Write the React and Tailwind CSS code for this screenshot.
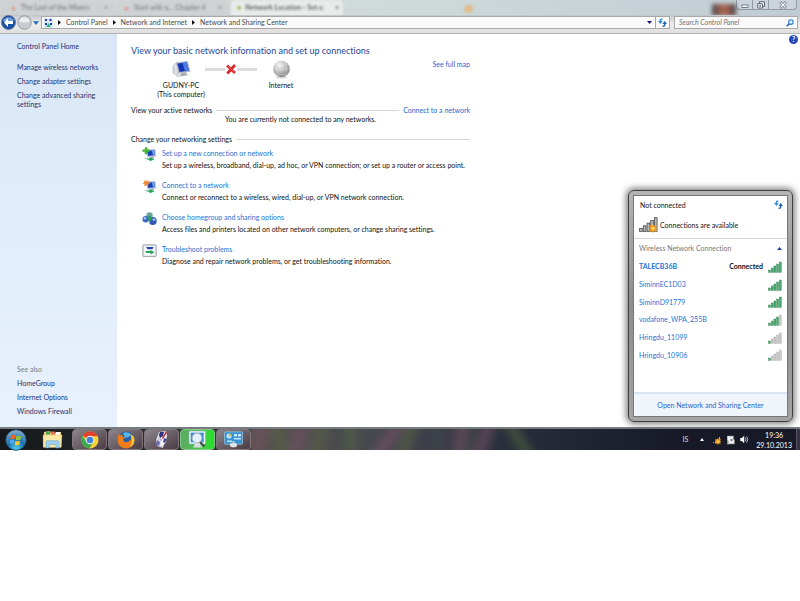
import React from "react";

const tasks = [
  {
    icon: "new",
    title: "Set up a new connection or network",
    text: "Set up a wireless, broadband, dial-up, ad hoc, or VPN connection; or set up a router or access point.",
  },
  {
    icon: "connect",
    title: "Connect to a network",
    text: "Connect or reconnect to a wireless, wired, dial-up, or VPN network connection.",
  },
  {
    icon: "homegroup",
    title: "Choose homegroup and sharing options",
    text: "Access files and printers located on other network computers, or change sharing settings.",
  },
  {
    icon: "trouble",
    title: "Troubleshoot problems",
    text: "Diagnose and repair network problems, or get troubleshooting information.",
  },
];

const networks = [
  { name: "TALECB36B", bars: 5, connected: true },
  { name: "SiminnEC1D03", bars: 5 },
  { name: "SiminnD91779", bars: 5 },
  { name: "vodafone_WPA_255B", bars: 4 },
  { name: "Hringdu_11099", bars: 1 },
  { name: "Hringdu_10906", bars: 1 },
];

// ================= ICONS =================
const SignalBars = ({ bars }) => (
  <svg className="h-3 w-[14px]" viewBox="0 0 14 12" aria-hidden="true">
    {[0, 1, 2, 3, 4].map((i) => (
      <rect
        key={i}
        x={0.5 + i * 2.7}
        y={9 - i * 2}
        width="2"
        height={2.5 + i * 2}
        fill={i < bars ? "#4fa873" : "#cacaca"}
        stroke={i < bars ? "#26834c" : "#a5a5a5"}
        strokeWidth="0.4"
      />
    ))}
  </svg>
);

const Star = ({ x, y, r }) => (
  <g transform={`translate(${x} ${y}) scale(${r})`}>
    <path
      d="M0-1 .25-.45.8-.75.5-.2 1 0 .5.2.8.75.25.45 0 1-.25.45-.8.75-.5.2-1 0-.5-.2-.8-.75-.25-.45Z"
      fill="#f7a21b"
      stroke="#f7a21b"
      strokeWidth=".2"
    />
    <circle r=".35" fill="#ffd76a" />
  </g>
);

const AvailableIcon = () => (
  <svg className="h-4 w-[19px]" viewBox="0 0 19 16" aria-hidden="true">
    {[0, 1, 2, 3, 4].map((i) => (
      <rect
        key={i}
        x={0.6 + i * 3.7}
        y={11.5 - i * 2.7}
        width="2.7"
        height={3 + i * 2.7}
        fill="#b9b9b9"
        stroke="#4d4d4d"
        strokeWidth=".8"
      />
    ))}
    <Star x={14} y={11.5} r={4} />
  </svg>
);

const RefreshIcon = () => (
  <svg className="h-[9px] w-[9px]" viewBox="0 0 9 9" aria-hidden="true">
    <path d="M4.4 1.2C2.7.8 2 1.8 2.4 3.4" fill="none" stroke="#2f8bd8" strokeWidth="1.4" />
    <path d="M.1 3h4.600L2.400 6Z" fill="#2f8bd8" />
    <path d="M4.6 8.2c1.9.3 2.3-1 2-2.6" fill="none" stroke="#1f62b8" strokeWidth="1.4" />
    <path d="M4.400 6H9L6.700 3Z" fill="#1f62b8" />
  </svg>
);

const ComputerIcon = () => (
  <svg className="h-[17px] w-[19px]" viewBox="0 0 19 17" aria-hidden="true">
    <path d="m1 4.500 3-2.500h3v11l-3 1-3-2Z" fill="#d4d7dc" stroke="#a1a5ad" strokeWidth=".5" />
    <path d="m1 4.500 3 .8v8" fill="none" stroke="#f3f3f3" strokeWidth=".8" />
    <path d="m4.500 1.600 11-1.200 2.500 10-11 1.500Z" fill="#cfd4de" stroke="#8c93a3" strokeWidth=".5" />
    <path d="m5.300 2.400 9.500-1.100 2.200 8.400-9.400 1.400Z" fill="#1736b5" />
    <path d="m10.500 1.800 4.300-.5 2.200 8.400-4 .6Z" fill="#4d7ae4" />
    <path d="m9 12 5-.8 1 2.200 2 .7-8 1.500-1-1.300Z" fill="#a9adb6" />
    <path d="m4 14.700 4-.6 1 1-4 .9Z" fill="#c2c4c8" />
  </svg>
);

const GlobeIcon = () => (
  <svg className="h-[19px] w-[19px]" viewBox="0 0 19 19" aria-hidden="true">
    <defs>
      <radialGradient id="globe" cx=".38" cy=".28" r=".75">
        <stop offset="0" stopColor="#f4f4f4" />
        <stop offset=".5" stopColor="#c0c0c0" />
        <stop offset="1" stopColor="#7d7d7d" />
      </radialGradient>
    </defs>
    <ellipse cx="9.500" cy="17.400" rx="5.500" ry="1.200" fill="#dadada" />
    <circle cx="9.500" cy="9" r="8.300" fill="url(#globe)" />
    <path
      d="M1.500 8q8 4 16 0M3.300 4q6 3 12.400 0M3 13.800q6.500 2.400 13 0M6 1.700q-4 7 .2 14.500M13 1.700q4 7-.2 14.500"
      fill="none"
      stroke="#eee"
      strokeWidth=".6"
      opacity=".5"
    />
  </svg>
);

const Monitor = () => (
  <>
    <path d="m4.500 3 8.500-1 1 7-8.500 1Z" fill="#dde6f2" stroke="#8793aa" strokeWidth=".4" />
    <path d="m5.300 3.700 7-.8.8 5.400-7 .8Z" fill="#1b3fb4" />
    <path d="m9.500 3.200 2.800-.3.800 5.400-1.800.2Z" fill="#6c9df0" />
    <path d="m8.500 10 3-.4.8 1.600-4 .5Z" fill="#9aa5b5" />
    <path d="M2 11.500h5.500V10l5 2.600-5 1.700v-1.200Z" fill="#23a455" />
  </>
);

const TaskIcon = ({ kind }) => (
  <svg className="h-[15px] w-[15px]" viewBox="0 0 15 15" aria-hidden="true">
    {kind === "new" && (
      <>
        <Monitor />
        <path d="M3 .5h2.200v2.200h2.300v2.100H5.200v2.300H3V4.800H.7V2.700H3Z" fill="#41bd36" stroke="#258f20" strokeWidth=".3" />
      </>
    )}
    {kind === "connect" && (
      <>
        <Monitor />
        <path d="m4 .4.9 1.900 2-.6-.6 2 1.800 1-2 .8.2 2L4.300 6.300 2.500 7.400l-.1-2.100L.4 4.400l1.900-1-.5-2 1.700.9Z" fill="#f08a37" />
      </>
    )}
    {kind === "homegroup" && (
      <>
        <circle cx="7.500" cy="4.500" r="3.200" fill="#6fa6a0" />
        <circle cx="3.800" cy="8.300" r="3.300" fill="#3a68c4" />
        <circle cx="10.800" cy="10" r="3.900" fill="#3058b8" />
        <circle cx="2.900" cy="7.300" r="1.300" fill="#a8c4f2" />
        <circle cx="12" cy="8.500" r="1.500" fill="#93b5ee" />
        <path d="m7 3.500 3 3.300-1 3.200-3-.5Z" fill="#2da054" />
        <path d="m6 10 2 .5L7 12Z" fill="#dfe7f5" />
      </>
    )}
    {kind === "trouble" && (
      <>
        <rect x=".8" y="1.800" width="13.400" height="11.800" rx=".8" fill="#e3e6ea" stroke="#8a9199" strokeWidth=".8" />
        <rect x="2.300" y="3.300" width="10.400" height="8.700" fill="#fbfdff" />
        <path d="M4 4h7.500l-1 2.200H5.500Z" fill="#2446b0" />
        <path d="M3 8h5.500V6.900l4 2.300-4 2.200V10H4.500Z" fill="#27a352" />
      </>
    )}
  </svg>
);

const StartOrb = () => (
  <svg className="h-[22px] w-[22px]" viewBox="0 0 22 22" aria-hidden="true">
    <defs>
      <radialGradient id="orb" cx=".5" cy=".9" r=".9">
        <stop offset="0" stopColor="#4fd0f3" />
        <stop offset=".45" stopColor="#1c6ea8" />
        <stop offset="1" stopColor="#8ab2cb" />
      </radialGradient>
    </defs>
    <circle cx="11" cy="11" r="10.300" fill="url(#orb)" stroke="#18405f" strokeWidth=".8" />
    <path d="M6 6.500q2.200-1.500 4.500-.2L9.800 10.200q-2.200-1.200-4.500 0Z" fill="#f0652a" />
    <path d="M11.400 6.700q2.300 1.200 4.800 0l-.8 4q-2.400 1.100-4.700 0Z" fill="#8cc63c" />
    <path d="M5.100 11.200q2.300-1.200 4.500 0L8.800 15q-2.200-1.200-4.500 0Z" fill="#4ca6ea" />
    <path d="M10.500 11.700q2.300 1.100 4.700 0l-.8 3.900q-2.400 1.200-4.700-.1Z" fill="#fdc52c" />
  </svg>
);

const FolderIcon = () => (
  <svg className="h-[19px] w-[21px]" viewBox="0 0 21 19" aria-hidden="true">
    <path d="M2 2 8 1l1 2 10-1 .5 15H1Z" fill="#e8cf79" />
    <path d="M4 1.500h4v3H4Z" fill="#4aa84f" />
    <path d="M9 1.500h4v3H9Z" fill="#e06b4f" />
    <path d="M14 2h4v3h-4Z" fill="#fff" />
    <path d="M1 5h19l-1 12.500H1.500Z" fill="#f8e9a7" stroke="#d5b75c" strokeWidth=".4" />
    <path d="M4 18v-6q0-1.300 1.300-1.300h10.400Q17 10.700 17 12v6h-3v-3.500H7V18Z" fill="#9dd0ee" stroke="#5e9cc6" strokeWidth=".5" />
  </svg>
);

const ChromeIcon = () => (
  <svg className="h-[18px] w-[18px]" viewBox="0 0 18 18" aria-hidden="true">
    <circle cx="9" cy="9" r="8.500" fill="#f8d335" />
    <path d="M9 9 1.600 4.700A8.500 8.500 0 0 1 16.600 5.200H9Z" fill="#e0412f" />
    <path d="M1.600 4.700A8.500 8.500 0 0 0 8.500 17.500L12.300 11 5.500 11Z" fill="#3fa94e" />
    <circle cx="9" cy="9" r="4.300" fill="#f5f5f5" />
    <circle cx="9" cy="9" r="3.300" fill="#3e83d8" />
  </svg>
);

const FirefoxIcon = () => (
  <svg className="h-[18px] w-[18px]" viewBox="0 0 18 18" aria-hidden="true">
    <circle cx="9.500" cy="8.200" r="7.800" fill="#1d5eaa" />
    <path d="M6 2q4-2 8 1l-2 3-4 1Z" fill="#5bb6e8" />
    <path d="M1.500 3q.5 1.200 1.400 1.500 1.500-1 3-.5-.8 1-.5 1.800l2.600.6q-.4 1.500-2 2 .5 3 3.700 2.500 3-.2 4.200-2.700.8-2.800-.7-5.200Q17.700 5 17.400 9.500 16.800 17 9 17.500 1.300 17 .6 9.500.5 5.500 1.500 3Z" fill="#ef7d1c" />
    <path d="M13.300 3Q17.700 5 17.400 9.500q-.4 4.500-4.400 6.800 3.500-6 .3-13.300Z" fill="#fbc93d" />
  </svg>
);

const PaintIcon = () => (
  <svg className="h-[19px] w-[16px]" viewBox="0 0 16 19" aria-hidden="true">
    <path d="m5 2 7-1 1 5-3 7-1 5-6-2-1-6Z" fill="#d9d7e6" />
    <path d="m10 3 3 1-1 8-3 4-3-1Z" fill="#f4f4fa" />
    <path d="M6 2 10 2 9 6 6 8 5 5Z" fill="#30347f" />
    <path d="m12 1 1 2-4 6-1-1Z" fill="#c23a48" />
    <path d="m3 10 3 2-1 4-3-1Z" fill="#6d6ba8" />
    <path d="m10 8 3 1-2 4-2-1Z" fill="#4c4c93" />
    <path d="m5 9 3 0-1 2Z" fill="#a99bd0" />
  </svg>
);

const ViewerIcon = () => (
  <svg className="h-[19px] w-[19px]" viewBox="0 0 19 19" aria-hidden="true">
    <rect x="1" y="1" width="16.500" height="13" rx="1" fill="#eef3f8" stroke="#9aa8b4" strokeWidth=".6" />
    <rect x="2.700" y="2.700" width="13" height="9.600" fill="#3d8bd6" />
    <path d="M5 17.500 7 14h5l2 3.500Z" fill="#d8dde2" />
    <path d="m11.500 11.500 5 5" stroke="#4b4b4b" strokeWidth="1.900" />
    <circle cx="9" cy="8" r="4.800" fill="#e6f0fa" stroke="#b3b9c0" strokeWidth=".9" />
  </svg>
);

const PanelIcon = () => (
  <svg className="h-[17px] w-[19px]" viewBox="0 0 19 17" aria-hidden="true">
    <rect x=".5" y=".8" width="18" height="12.500" rx="1" fill="#3793d2" stroke="#a7d2ef" strokeWidth=".6" />
    <circle cx="5" cy="5" r="2.600" fill="#bfe2f7" />
    <path d="M5 5V2.400A2.600 2.600 0 0 1 7.600 5Z" fill="#f6a93a" />
    <path d="M10 3h3v2.500h-3ZM14 3h3v2.500h-3ZM10 7h7v1.500h-7ZM3 9.500h5V11H3Z" fill="#c6e6fa" />
    <ellipse cx="9.500" cy="14" rx="3.600" ry="2.300" fill="#e2e5e8" />
    <path d="M8.500 10h2v2.500h-2Z" fill="#c9cdd2" />
  </svg>
);

// ================= PARTS =================
const TitleBar = () => (
  <header className="flex h-[15px] justify-between overflow-hidden bg-gradient-to-r from-[#d4d6d6] via-[#cedad9] to-[#bfccd4]">
    <div className="flex h-5 gap-px text-[7px] leading-[15px] text-[#777] blur-[1px]" aria-hidden="true">
      <div className="flex w-[116px] gap-1 rounded-t bg-[#cfd2d3] pl-[10px]">
        <span className="text-[#dd8d83]">▲</span>
        <span className="flex-1 truncate">The Last of the Mixers</span>
        <span className="pr-2">×</span>
      </div>
      <div className="flex w-[113px] gap-1 rounded-t bg-[#cfd2d3] pl-[6px]">
        <span className="text-[#dd8d83]">▲</span>
        <span className="flex-1 truncate">Start wiki q... Chapter 4</span>
        <span className="pr-2">×</span>
      </div>
      <div className="flex w-[112px] gap-1 rounded-t bg-[#e9ebeb] pl-[6px] font-bold text-[#666]">
        <span className="text-[#9db34f]">●</span>
        <span className="flex-1 truncate">Network Location - Set u</span>
        <span className="pr-1">×</span>
      </div>
      <div className="ml-[120px] mt-[5px] h-2 w-[9px] rounded-full bg-[#dfbd8c]" />
    </div>
    <div className="flex">
      <div className="mt-1 h-3 w-6 bg-gradient-to-r from-[#514b4d] via-[#b26650] to-[#4c4648] blur-[2px]" aria-hidden="true" />
      <div className="mr-[3px] flex h-[10px] rounded-b-sm border border-t-0 border-[#919aa3] bg-[#cbd4dc] text-[#5b6170]">
        <button aria-label="Minimize" className="flex w-4 items-center justify-center border-r border-[#919aa3]">
          <svg className="h-2 w-2" viewBox="0 0 8 8"><rect x="1" y="4" width="6" height="2.400" fill="#fff" stroke="currentColor" strokeWidth=".8" /></svg>
        </button>
        <button aria-label="Restore" className="flex w-4 items-center justify-center border-r border-[#919aa3]">
          <svg className="h-2 w-2" viewBox="0 0 8 8" fill="#fff" stroke="currentColor"><path d="M2.500.8h5v4.500h-5Z" /><path d="M.8 2.700h4.700V7H.8Z" /><path d="M2.700 4.500h1v.8h-1Z" /></svg>
        </button>
        <button aria-label="Close" className="flex w-[27px] items-center justify-center">
          <svg className="h-2 w-2" viewBox="0 0 8 8" fill="none"><path d="m1.200 1.200 5.600 5.600m0-5.600L1.200 6.800" stroke="currentColor" strokeWidth="2.600" /><path d="m1.500 1.500 5 5m0-5-5 5" stroke="#fff" strokeWidth="1.200" /></svg>
        </button>
      </div>
    </div>
  </header>
);

const Crumb = ({ children }) => (
  <>
    <svg className="h-[5px] w-[3px]" viewBox="0 0 3 5" aria-hidden="true"><path d="M0 0v5l3-2.500Z" fill="#111" /></svg>
    <a href="#" className="whitespace-nowrap text-[#4a4a4a]">{children}</a>
  </>
);

const AddressBar = () => (
  <div className="flex h-[19px] items-center border-b border-[#b3b3b3] bg-gradient-to-b from-[#c3c6c8] via-[#ededed] to-[#dedede] pr-[2px] pb-[3px]">
    <div className="flex w-[41px] items-center gap-px pl-px">
      <button aria-label="Back">
        <svg className="h-[15px] w-[15px]" viewBox="0 0 15 15">
          <circle cx="7.500" cy="7.500" r="7" fill="#1c52a6" stroke="#5d6f8d" strokeWidth=".8" />
          <path d="M2 6a5.700 5 0 0 1 11 0q-5.500 2-11 0Z" fill="#6fa0dc" />
          <path d="m7 3-4 4.500L7 12V9h5V6H7Z" fill="#fff" />
        </svg>
      </button>
      <button aria-label="Forward">
        <svg className="h-[15px] w-[15px]" viewBox="0 0 15 15">
          <circle cx="7.500" cy="7.500" r="6.800" fill="#c8cbd0" stroke="#8d9196" strokeWidth=".8" />
          <path d="M2 6.500a5.600 5.200 0 0 1 11 0q-5.500 2-11 0Z" fill="#ebedee" />
        </svg>
      </button>
      <button aria-label="Recent pages">
        <svg className="h-1 w-[6px]" viewBox="0 0 6 4"><path d="M0 .3h6L3 4Z" fill="#1c6cae" /></svg>
      </button>
    </div>
    <nav className="flex h-[13px] flex-1 items-center gap-[5px] border border-[#a9a9a9] bg-[#fafafa] pl-[2px] text-[7px] leading-[9px]">
      <svg className="h-[10px] w-[9px]" viewBox="0 0 9 10" aria-hidden="true">
        <rect width="9" height="10" fill="#dfe8f6" />
        <path d="M1 1h2v2H1ZM5.500 1h2v2h-2ZM1 5h2v2H1ZM6 5h2v2H6Z" fill="#2438b0" />
        <path d="m4.500 5 2.500 4H2Z" fill="#31bb7a" />
      </svg>
      <Crumb>Control Panel</Crumb>
      <Crumb>Network and Internet</Crumb>
      <Crumb>Network and Sharing Center</Crumb>
      <span className="flex-1" />
      <button aria-label="Previous locations">
        <svg className="h-[3px] w-[5px]" viewBox="0 0 5 3"><path d="M0 0h5L2.500 3Z" fill="#15156e" /></svg>
      </button>
      <button aria-label="Refresh" className="-ml-[2px] flex h-[11px] w-[14px] items-center justify-center border-l border-[#a9a9a9]">
        <RefreshIcon />
      </button>
    </nav>
    <label className="ml-1 flex h-[13px] w-[124px] items-center border border-[#a9a9a9] bg-[#fafafa] pl-1 pr-[3px]">
      <input
        type="text"
        aria-label="Search Control Panel"
        placeholder="Search Control Panel"
        className="min-w-0 flex-1 bg-transparent text-[7px] leading-[9px] italic outline-none placeholder:text-[#747474]"
      />
      <svg className="h-2 w-2" viewBox="0 0 8 8" fill="none" aria-hidden="true">
        <path d="M.7 7.300 3.300 4.800" stroke="#1d4fa3" strokeWidth="1.500" />
        <circle cx="4.900" cy="3.100" r="2.300" stroke="#2b7fd0" strokeWidth="1.100" fill="#dff0fc" />
      </svg>
    </label>
  </div>
);

const Sidebar = () => (
  <aside className="flex w-[117px] shrink-0 flex-col justify-between bg-gradient-to-b from-[#d9e6f6] via-[#e1edfa] to-[#e7f1fd] pt-2 pb-[11px] pl-[17px] text-[#1e3272]">
    <nav className="flex flex-col gap-[5px]">
      <a href="#" className="mb-[7px]">Control Panel Home</a>
      <a href="#">Manage wireless networks</a>
      <a href="#">Change adapter settings</a>
      <a href="#" className="w-[90px]">Change advanced sharing settings</a>
    </nav>
    <nav className="flex flex-col gap-[5px]">
      <span className="text-[#808080]">See also</span>
      <a href="#">HomeGroup</a>
      <a href="#">Internet Options</a>
      <a href="#">Windows Firewall</a>
    </nav>
  </aside>
);

const NetworkMap = () => (
  <div className="flex items-start pl-5 pt-[3px]">
    <div className="flex w-[60px] flex-col items-center text-center">
      <div className="flex h-[19px] items-center"><ComputerIcon /></div>
      <p className="mt-[2px]">GUDNY-PC<br />(This computer)</p>
    </div>
    <div className="-mx-[6px] mt-[3px] flex w-[52px] items-center">
      <span className="h-[3px] flex-1 bg-[#dcdcdc]" />
      <svg className="h-3 w-3" viewBox="0 0 12 12" aria-label="Not connected">
        <path d="m2 2.500 8 7.500M10 2 2.300 10.500" stroke="#d8262b" strokeWidth="2.700" />
        <path d="m2.500 2.500 6.800 6.500" stroke="#f3797a" strokeWidth=".8" />
      </svg>
      <span className="h-[3px] flex-1 bg-[#dcdcdc]" />
    </div>
    <div className="flex w-[60px] flex-col items-center">
      <GlobeIcon />
      <p className="mt-[2px]">Internet</p>
    </div>
    <a href="#" className="ml-auto text-[#1f66cc]">See full map</a>
  </div>
);

const NetworkFlyout = () => (
  <section className="absolute right-[7px] bottom-[5px] w-[165px] rounded-md border border-[#3f3f3f] bg-gradient-to-b from-[#b4b4b4] via-[#8d8d8d] to-[#a3a3a3] p-1 shadow-[0_0_6px_2px_rgba(0,0,0,0.5)]">
    <div className="border border-[#777] bg-white">
      <div className="flex h-[43px] flex-col justify-between border-b border-[#d5d9df] pt-1 pb-[5px]">
        <div className="flex items-start justify-between pl-[6px] pr-1">
          <span className="pt-px">Not connected</span>
          <button aria-label="Refresh"><RefreshIcon /></button>
        </div>
        <div className="flex items-center gap-[2px] pl-[5px]">
          <AvailableIcon />
          <span>Connections are available</span>
        </div>
      </div>
      <div className="flex h-[19px] items-center justify-between px-[5px] text-[#777]">
        <span>Wireless Network Connection</span>
        <button aria-label="Collapse">
          <svg className="h-[3px] w-[5px]" viewBox="0 0 5 3"><path d="M0 3h5L2.500 0Z" fill="#1f3f9b" /></svg>
        </button>
      </div>
      <ul className="flex min-h-[134px] flex-col pb-7">
        {networks.map((n) => (
          <li key={n.name} className="flex flex-1 items-center px-[5px]">
            <button className={n.connected ? "font-bold text-[#1c6fd0]" : "text-[#2673d6]"}>{n.name}</button>
            <span className="flex-1" />
            {n.connected && <span className="pr-[5px] font-bold">Connected</span>}
            <SignalBars bars={n.bars} />
          </li>
        ))}
      </ul>
      <div className="flex h-6 items-center justify-center border-t-2 border-[#dae4f1] bg-[#f0f4fb]">
        <a href="#" className="text-[#1f66cc]">Open Network and Sharing Center</a>
      </div>
    </div>
  </section>
);

const TaskButton = ({ label, green, children }) => (
  <button
    aria-label={label}
    className={`flex h-[21px] w-[35px] items-center justify-center rounded-sm border ${
      green
        ? "border-[#86c888] bg-gradient-to-r from-[#5da963] to-[#20df24]"
        : "border-[#82777f] bg-gradient-to-br from-[#8d868b] to-[#4a3b45]"
    }`}
  >
    {children}
  </button>
);

const Taskbar = () => (
  <footer className="flex h-[23px] items-center border-t-2 border-[#777c80] bg-gradient-to-r from-[#15171b] via-[#454c40] via-45% to-[#191b28]">
    <button aria-label="Start" className="ml-[5px]"><StartOrb /></button>
    <button aria-label="Windows Explorer" className="ml-[15px]"><FolderIcon /></button>
    <div className="ml-[9px] flex gap-px">
      <TaskButton label="Chrome"><ChromeIcon /></TaskButton>
      <TaskButton label="Firefox"><FirefoxIcon /></TaskButton>
      <TaskButton label="Paint"><PaintIcon /></TaskButton>
      <TaskButton label="Viewer" green><ViewerIcon /></TaskButton>
      <TaskButton label="Network and Sharing Center"><PanelIcon /></TaskButton>
    </div>
    {/* wallpaper seen through the glass */}
    <div className="flex h-[21px] flex-1 overflow-hidden" aria-hidden="true">
      <svg className="h-full w-full" viewBox="0 0 400 22" preserveAspectRatio="none">
        <defs>
          <filter id="soft" x="-10%" y="-50%" width="120%" height="200%"><feGaussianBlur stdDeviation="5 3" /></filter>
          <linearGradient id="night">
            <stop offset="0" stopColor="#57504f" />
            <stop offset=".3" stopColor="#494750" />
            <stop offset=".6" stopColor="#282e3c" />
            <stop offset="1" stopColor="#171927" />
          </linearGradient>
        </defs>
        <rect width="400" height="22" fill="url(#night)" />
        <g filter="url(#soft)" strokeWidth="9" fill="none" opacity=".65">
          <path d="M12-8 4 30M48-8 40 30M140-8l-24 38M196-8l-5 38M222-8l-12 38" stroke="#7b5468" />
          <path d="M22-8l8 38M66-8 60 30M92-8v38M152-8l-14 38M238-8l20 38" stroke="#56693f" />
          <path d="M82-8l4 38M110-8l-6 38M176-8l-6 38M206-8l-6 38" stroke="#414b4c" />
        </g>
      </svg>
    </div>
    <div className="flex items-center bg-[#171927] text-white">
      <button className="text-[#ddd]">IS</button>
      <button aria-label="Show hidden icons" className="ml-3">
        <svg className="h-[3px] w-1" viewBox="0 0 4 3"><path d="M0 3h4L2 0Z" fill="#fff" /></svg>
      </button>
      <button aria-label="Network" className="ml-2">
        <svg className="h-[10px] w-[10px]" viewBox="0 0 10 10">
          <path d="M1 8V7h1v1ZM3 8V5.500h1V8ZM5 8V4h1v4ZM7 8V2h1v6Z" fill="#aaa" />
          <Star x={6} y={6.5} r={3} />
        </svg>
      </button>
      <button aria-label="Action Center" className="ml-1">
        <svg className="h-[10px] w-[9px]" viewBox="0 0 9 10">
          <path d="M1.500 1h6v3l1 1v4h-6V6l-1-1Z" fill="#eee" stroke="#777" strokeWidth=".5" />
          <path d="M2 1v8.500" stroke="#fff" />
          <path d="M4.500 4h2v2h-2Z" fill="#777" />
        </svg>
      </button>
      <button aria-label="Volume" className="ml-[5px]">
        <svg className="h-[9px] w-[9px]" viewBox="0 0 9 9" fill="none" stroke="#ddd" strokeWidth=".8">
          <path d="M.3 3h1.500L4.200.7v7.600L1.800 6H.3Z" fill="#fff" stroke="none" />
          <path d="M5.400 2.800q1 1.700 0 3.400M6.700 1.500q2 3 0 6" />
        </svg>
      </button>
      <button className="ml-[7px] text-center leading-[10px]">
        <span className="block">19:36</span>
        <span className="block">29.10.2013</span>
      </button>
      <button aria-label="Show desktop" className="ml-1 h-[21px] w-1 border-l border-[#565361] bg-[#353341]" />
    </div>
  </footer>
);

const SectionTitle = ({ children, link }) => (
  <div className="flex items-center gap-1">
    <h2>{children}</h2>
    <span className="h-px flex-1 bg-[#d5d5d5]" />
    {link && <a href="#" className="text-[#1f66cc]">{link}</a>}
  </div>
);

export default function App() {
  return (
    <div className="min-h-screen bg-white font-['Lato','Open_Sans',sans-serif] text-[7px] leading-[9px] text-[#111] [font-variant-ligatures:none]">
      <div className="relative flex min-h-[427px] flex-col">
        <TitleBar />
        <AddressBar />
        <div className="flex flex-1">
          <Sidebar />
          <main className="flex-1 pt-[11px] pl-[14px]">
            <div className="max-w-[339px]">
              <h1 className="text-[9px] leading-3 text-[#1d469f]">
                View your basic network information and set up connections
              </h1>
              <NetworkMap />
              <div className="mt-[7px]">
                <SectionTitle link="Connect to a network">View your active networks</SectionTitle>
                <p className="text-center">You are currently not connected to any networks.</p>
              </div>
              <div className="mt-[11px]">
                <SectionTitle>Change your networking settings</SectionTitle>
              </div>
              <ul className="mt-[3px] flex flex-col gap-2 pl-[11px]">
                {tasks.map((t) => (
                  <li key={t.title} className="flex gap-[5px] whitespace-nowrap leading-3">
                    <TaskIcon kind={t.icon} />
                    <div>
                      <a href="#" className="text-[#2673d6]">{t.title}</a>
                      <p>{t.text}</p>
                    </div>
                  </li>
                ))}
              </ul>
            </div>
          </main>
          <div className="pt-[1px] pr-[2px]">
            <button aria-label="Help" className="flex h-[9px] w-[9px] items-center justify-center rounded-full bg-[#2448b8] text-[7px] font-bold leading-[9px] text-white">
              ?
            </button>
          </div>
        </div>
        <NetworkFlyout />
      </div>
      <Taskbar />
    </div>
  );
}
